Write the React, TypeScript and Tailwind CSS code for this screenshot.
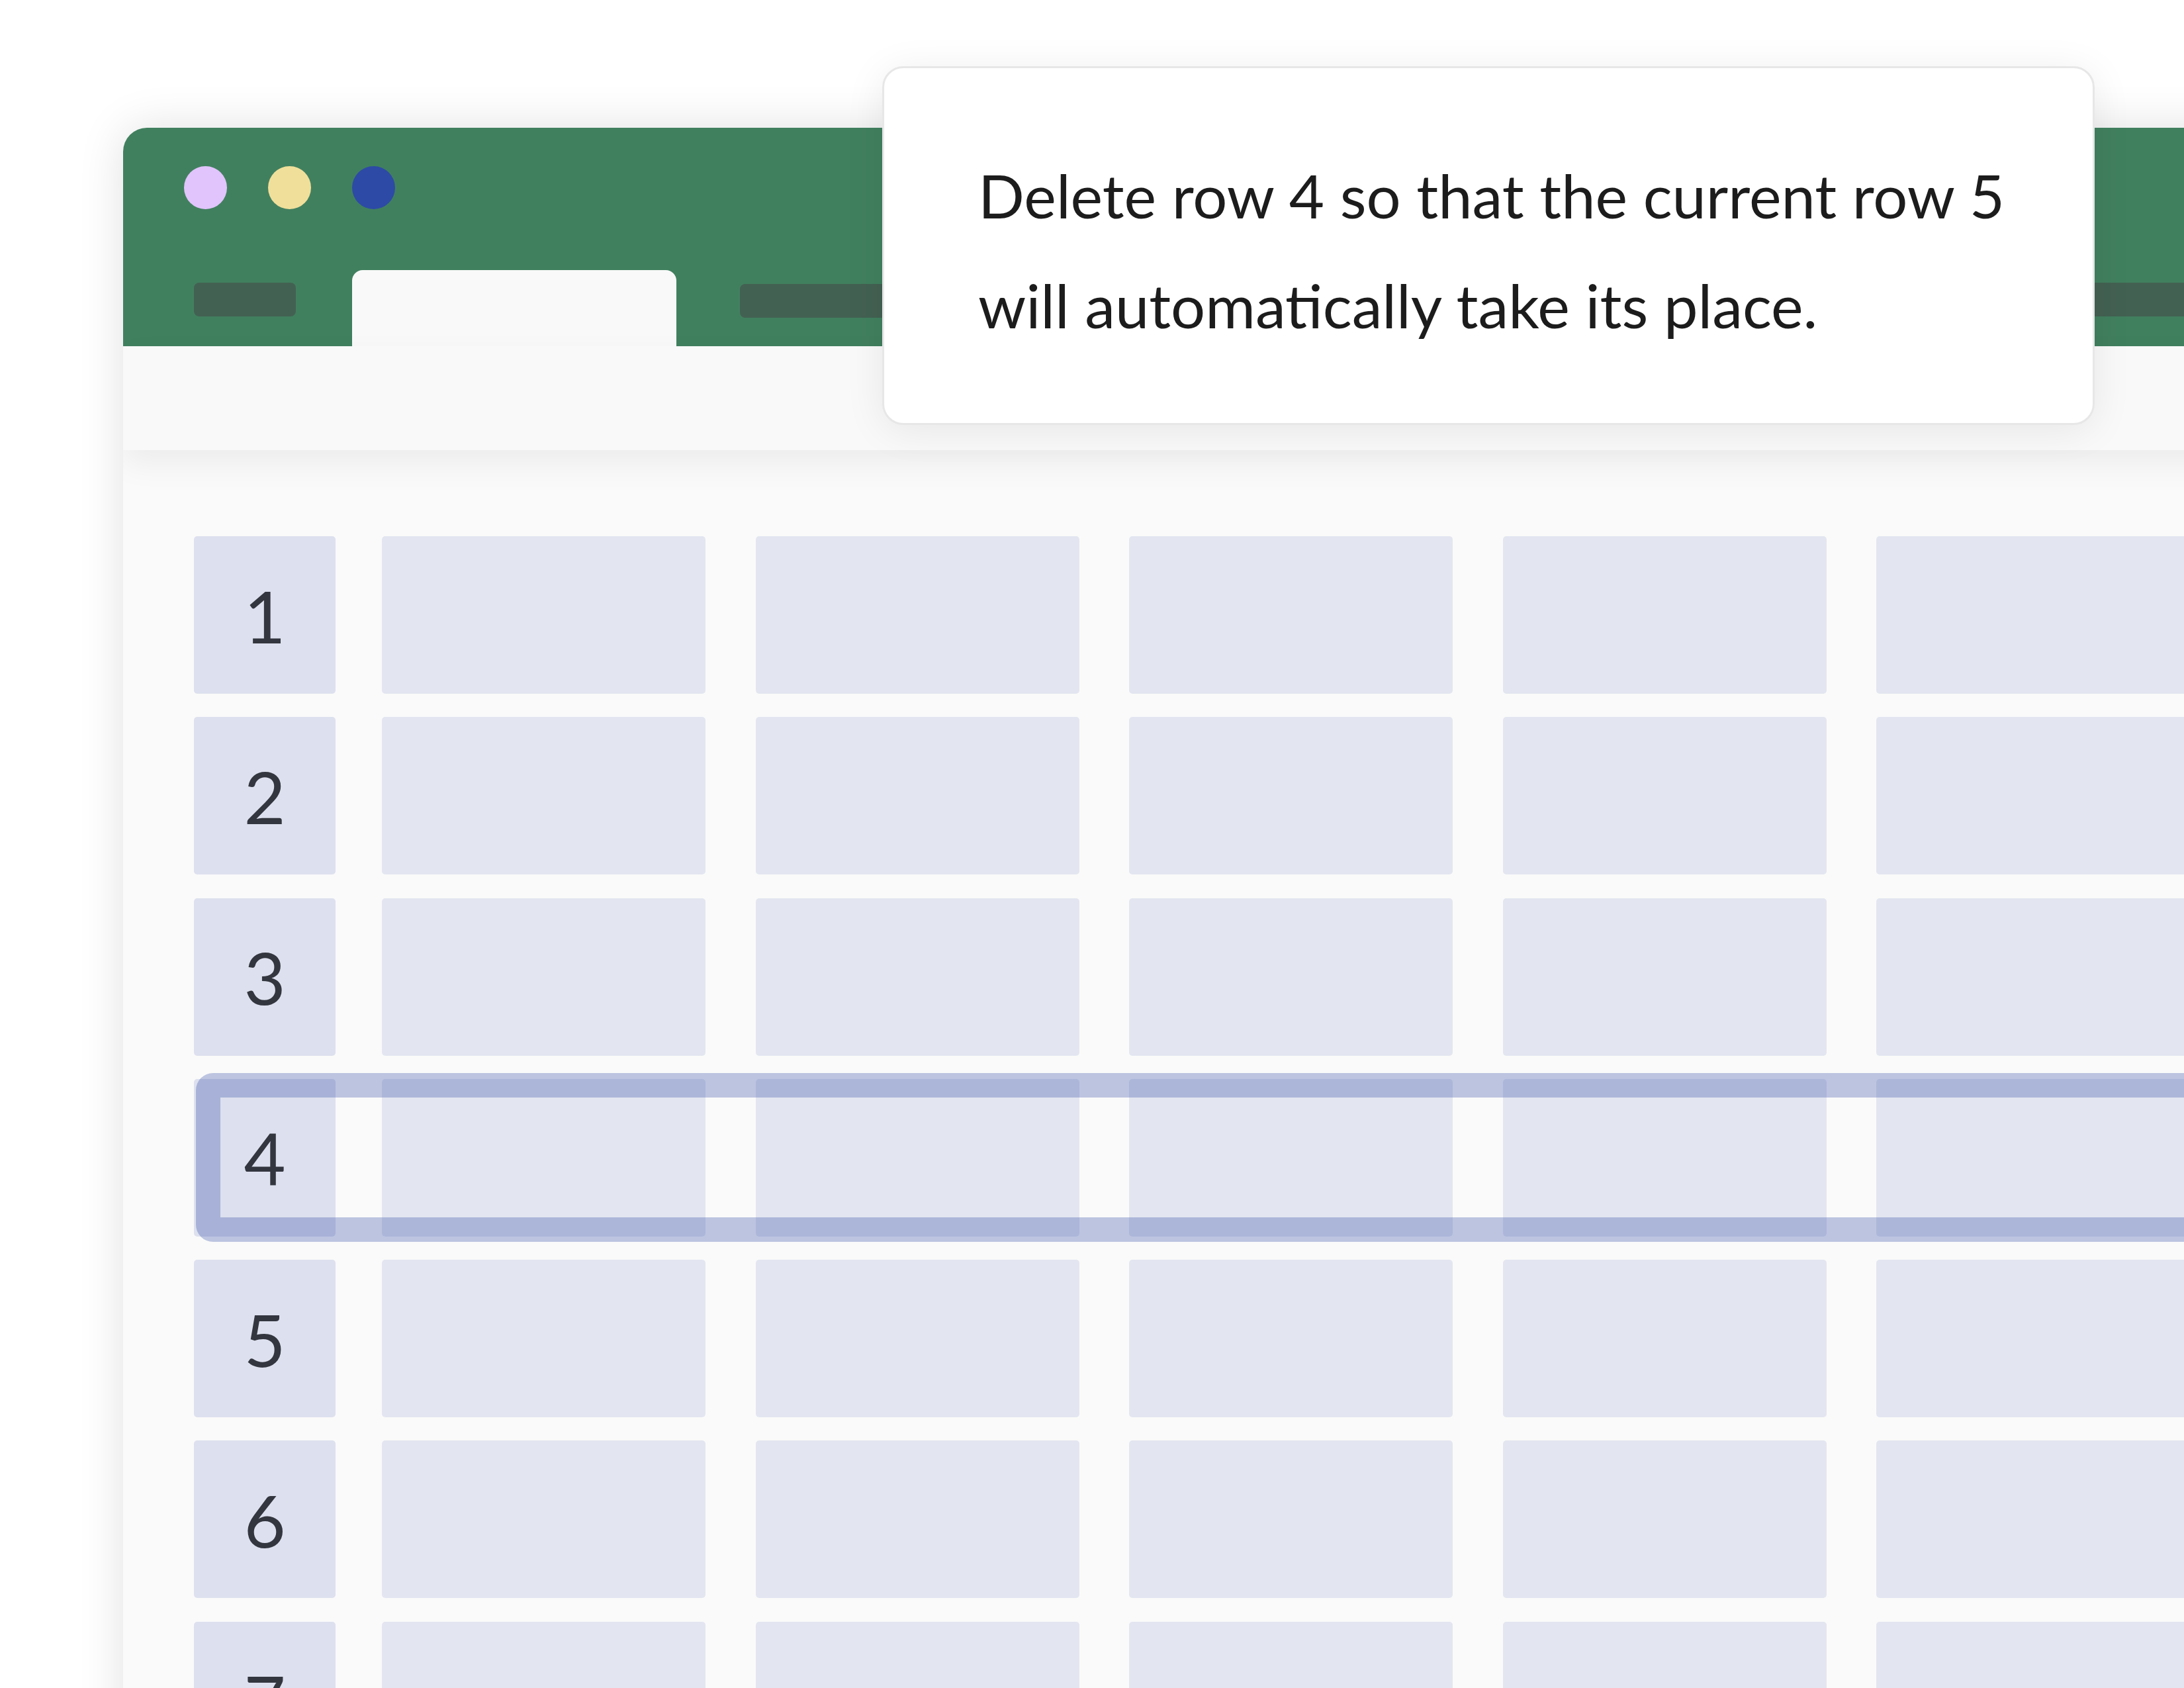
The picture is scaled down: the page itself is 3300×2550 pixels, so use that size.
import React from "react";

const rows = [1, 2, 3, 4, 5, 6, 7];
const cols = [0, 1, 2, 3, 4];

export default function App() {
  return (
    <div
      className="relative w-[3300px] h-[2550px] overflow-hidden bg-white"
      style={{ fontFamily: "Lato, 'Noto Sans', sans-serif" }}
    >
      <div className="pl-[186px] pt-[193px]">
        {/* Window */}
        <div className="w-[3300px] h-[2500px] rounded-tl-[36px] overflow-hidden bg-[#fafafa] shadow-[0_0_70px_rgba(0,0,0,0.12)]">
          {/* Title bar */}
          <div className="h-[330px] bg-[#41805f] flex flex-col">
            <div className="flex gap-[62px] pl-[92px] pt-[58px] h-[215px] shrink-0">
              <div className="shrink-0 w-[65px] h-[65px] rounded-full bg-[#e0c4fb]" />
              <div className="shrink-0 w-[65px] h-[65px] rounded-full bg-[#f0df9a]" />
              <div className="shrink-0 w-[65px] h-[65px] rounded-full bg-[#2d4aa6]" />
            </div>
            <div className="flex items-start h-[115px] shrink-0">
              <div className="shrink-0 ml-[107px] mt-[19px] w-[154px] h-[51px] rounded-[8px] bg-[#436152]" />
              <div className="shrink-0 ml-[85px] w-[490px] h-[115px] rounded-t-[16px] bg-[#f9f9f9]" />
              <div className="shrink-0 ml-[96px] mt-[21px] w-[300px] h-[51px] rounded-[8px] bg-[#436152]" />
              <div className="shrink-0 ml-[1400px] mt-[19px] w-[700px] h-[51px] rounded-l-[8px] bg-[#436152]" />
            </div>
          </div>
          {/* Toolbar */}
          <div className="relative z-10 h-[157px] bg-[#f9f9f9] shadow-[0_20px_45px_rgba(0,0,0,0.06)]" />
          {/* Grid */}
          <div className="relative pl-[107px] pt-[130px]">
            <div className="relative flex flex-col gap-[35.3px]">
              {rows.map((r) => (
                <div key={r} className="flex h-[238px] shrink-0">
                  <div className="shrink-0 w-[214px] h-full rounded-[5px] bg-[#dde0ee] flex items-center justify-center text-[109px] leading-none text-[#33363e]">
                    {r}
                  </div>
                  <div className="shrink-0 ml-[70px] flex gap-[75.5px]">
                    {cols.map((c) => (
                      <div key={c} className="shrink-0 w-[489px] h-full rounded-[5px] bg-[#e3e6f0]" />
                    ))}
                  </div>
                </div>
              ))}
              {/* Highlight of row 4 */}
              <div className="absolute left-[3px] top-[811px] w-[3200px] h-[255px] rounded-l-[26px] border-[37px] border-[rgba(45,74,166,0.3)]" />
            </div>
          </div>
        </div>
      </div>

      {/* Tooltip */}
      <div className="absolute z-20 left-[1333px] top-[100px] w-[1832px] h-[542px] rounded-[32px] border-[3px] border-[#e7e7e7] bg-white shadow-[0_8px_60px_rgba(0,0,0,0.08)] pl-[142px] pt-[109px]">
        <p className="text-[92px] leading-[166px] text-[#1c1c1c] whitespace-nowrap">
          Delete row 4 so that the current row 5
          <br />
          will automatically take its place.
        </p>
      </div>
    </div>
  );
}
